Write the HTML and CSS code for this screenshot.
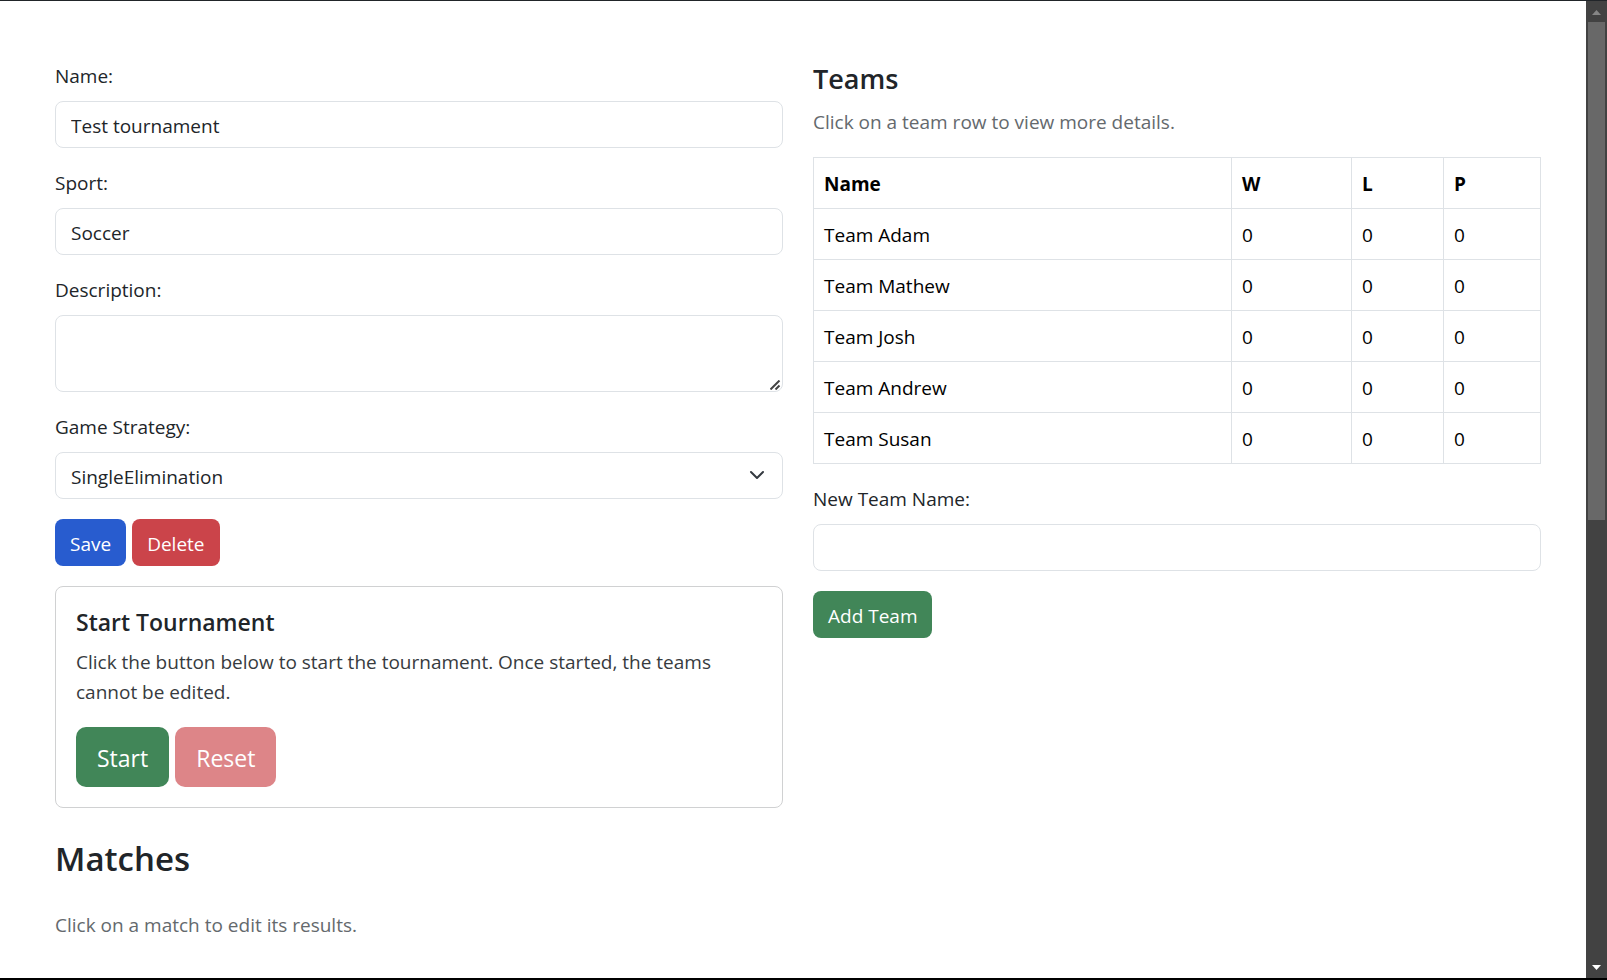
FILE: index.html
```html
<!DOCTYPE html>
<html lang="en">
<head>
<meta charset="utf-8">
<meta name="viewport" content="width=device-width, initial-scale=1">
<title>Edit Tournament</title>
<link rel="stylesheet" href="styles.css">
</head>
<body>
<div class="window">
  <main class="content">
    <div class="columns">
      <section class="column">
        <form class="stack">
          <div class="field">
            <label for="name">Name:</label>
            <input class="control" id="name" type="text" value="Test tournament">
          </div>
          <div class="field">
            <label for="sport">Sport:</label>
            <input class="control" id="sport" type="text" value="Soccer">
          </div>
          <div class="field">
            <label for="description">Description:</label>
            <div class="control-wrap">
              <textarea class="control control-area" id="description"></textarea>
              <svg class="grip" viewBox="0 0 11 10" aria-hidden="true"><path d="M.5 9.500 9.500.5M5.500 9.500l4-4" /></svg>
            </div>
          </div>
          <div class="field">
            <label for="strategy">Game Strategy:</label>
            <div class="control-wrap">
              <select class="control" id="strategy"><option>SingleElimination</option></select>
              <svg class="chevron" viewBox="0 0 16 16" aria-hidden="true"><path d="m2 5 6 6 6-6" /></svg>
            </div>
          </div>
          <div class="actions">
            <button class="btn btn-primary" type="button">Save</button>
            <button class="btn btn-danger" type="button">Delete</button>
          </div>
        </form>
        <article class="card">
          <h5 class="card-title">Start Tournament</h5>
          <p class="card-text">Click the button below to start the tournament. Once started, the teams cannot be edited.</p>
          <div class="actions">
            <button class="btn btn-large btn-success" type="button">Start</button>
            <button class="btn btn-large btn-danger" type="button" disabled>Reset</button>
          </div>
        </article>
      </section>
      <section class="column">
        <div class="heading">
          <h4 class="section-title">Teams</h4>
          <p class="muted">Click on a team row to view more details.</p>
        </div>
        <table class="teams">
          <colgroup><col class="col-name"><col class="col-w"><col class="col-l"><col class="col-p"></colgroup>
          <thead><tr><th>Name</th><th>W</th><th>L</th><th>P</th></tr></thead>
          <tbody>
            <tr><td>Team Adam</td><td>0</td><td>0</td><td>0</td></tr>
            <tr><td>Team Mathew</td><td>0</td><td>0</td><td>0</td></tr>
            <tr><td>Team Josh</td><td>0</td><td>0</td><td>0</td></tr>
            <tr><td>Team Andrew</td><td>0</td><td>0</td><td>0</td></tr>
            <tr><td>Team Susan</td><td>0</td><td>0</td><td>0</td></tr>
          </tbody>
        </table>
        <form class="stack">
          <div class="field">
            <label for="team">New Team Name:</label>
            <input class="control" id="team" type="text">
          </div>
          <div class="actions">
            <button class="btn btn-success" type="button">Add Team</button>
          </div>
        </form>
      </section>
    </div>
    <section class="matches">
      <h2 class="matches-title">Matches</h2>
      <p class="muted">Click on a match to edit its results.</p>
    </section>
  </main>
  <div class="scrollbar" aria-hidden="true">
    <svg class="arrow arrow-up" viewBox="0 0 9 5"><path d="M0 5 4.500 0 9 5z" /></svg>
    <div class="track"><div class="thumb"></div></div>
    <svg class="arrow arrow-down" viewBox="0 0 9 5"><path d="M0 0h9L4.500 5z" /></svg>
  </div>
</div>
</body>
</html>
```
FILE: styles.css
```css
*, *::before, *::after { box-sizing: border-box; }

body {
  margin: 0;
  background: #fff;
  color: #212529;
  font: 400 19px/30px "Open Sans", "Noto Sans", sans-serif;
}

h2, h4, h5, p { margin: 0; }
h2, h4, h5 { font-weight: 600; }

.window {
  display: flex;
  min-height: 100vh;
  border-top: 1px solid #212529;
  border-bottom: 2px solid #000;
}

.content {
  flex: 1;
  min-width: 0;
  padding: 60px 45px 30px 55px;
}

.columns {
  display: grid;
  grid-template-columns: 1fr 1fr;
  gap: 30px;
}

.column, .stack {
  display: flex;
  flex-direction: column;
  gap: 20px;
  min-width: 0;
}

.field, .heading {
  display: flex;
  flex-direction: column;
  gap: 10px;
}

.control-wrap { position: relative; display: flex; }

.control {
  display: block;
  width: 100%;
  height: 47px;
  margin: 0;
  padding: 9px 15px 7px;
  border: 1px solid #dee2e6;
  border-radius: 8px;
  background: #fff;
  color: #212529;
  font: inherit;
  appearance: none;
}

.control-area { height: 77px; resize: none; overflow: auto; }

.grip, .chevron {
  position: absolute;
  fill: none;
  pointer-events: none;
}

.grip {
  right: 2px;
  bottom: 2px;
  width: 11px;
  height: 10px;
  stroke: #444;
  stroke-width: 2;
}

.chevron {
  right: 18px;
  top: 15px;
  width: 16px;
  height: 16px;
  stroke: #343a40;
  stroke-width: 2;
  stroke-linecap: round;
  stroke-linejoin: round;
}

.actions { display: flex; gap: 6px; }

.btn {
  height: 47px;
  padding: 2px 15px 0;
  border: 0;
  border-radius: 8px;
  color: #fff;
  font: inherit;
}

.btn-large {
  height: 60px;
  padding: 2px 21px 0;
  border-radius: 10px;
  font-size: 23px;
}

.btn-primary { background: #285ccf; }
.btn-danger { background: #cb444a; }
.btn-success { background: #418658; }
.btn:disabled { opacity: .65; }

.card {
  padding: 20px;
  border: 1px solid #d0d1d2;
  border-radius: 8px;
}

.card-title {
  margin-bottom: 10px;
  font-size: 23px;
  line-height: 30px;
}

.card-text { margin-bottom: 20px; color: #373b3e; }

.section-title { font-size: 27px; line-height: 36px; }
.muted { color: #64696d; }

.teams {
  width: 100%;
  border-collapse: collapse;
  table-layout: fixed;
  color: #000;
}

.teams th, .teams td {
  padding: 11px 10px 9px;
  border: 1px solid #dee2e6;
  text-align: left;
}

.col-w { width: 120px; }
.col-l { width: 92px; }
.col-p { width: 97px; }

.matches {
  display: flex;
  flex-direction: column;
  gap: 30px;
  margin-top: 30px;
}

.matches-title { font-size: 33px; line-height: 42px; }

.scrollbar {
  display: flex;
  flex-direction: column;
  align-items: center;
  flex: 0 0 21px;
  padding: 9px 2px 8px;
  background: #424242;
}

.arrow { width: 9px; height: 5px; }
.arrow-up { fill: #868686; }
.arrow-down { fill: #fff; }

.track { flex: 1; width: 17px; padding: 7px 0 11px; }
.thumb { height: 498px; background: #686868; }
```
